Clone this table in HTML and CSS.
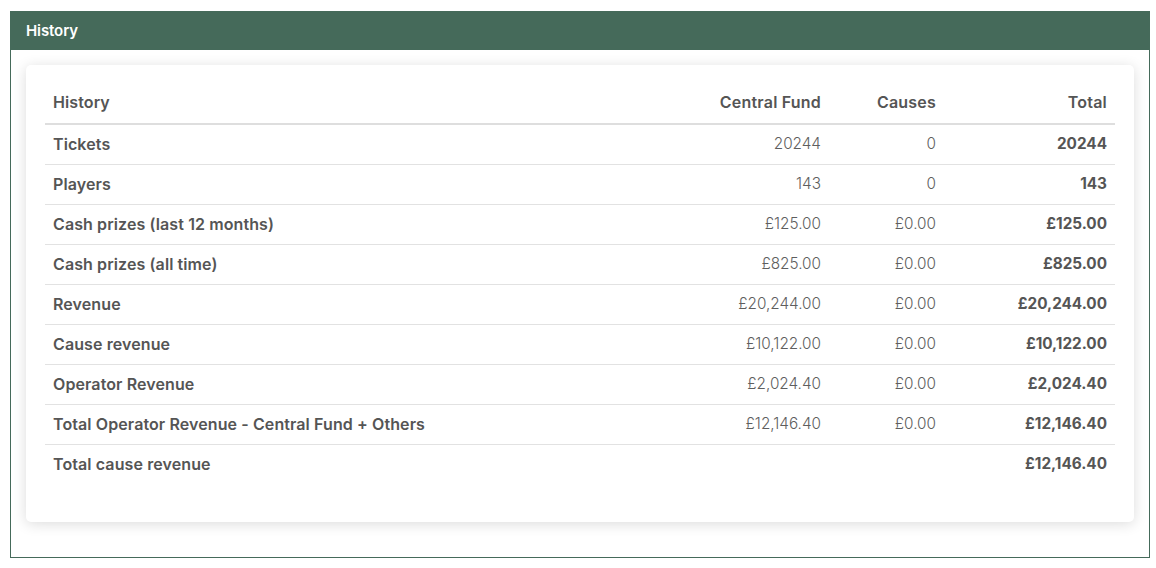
FILE: index.html
```html
<!DOCTYPE html>
<html>
<head>
<meta charset="utf-8">
<link rel="stylesheet" href="styles.css">
</head>
<body>
<section class="panel">
  <header class="panel-head">History</header>
  <div class="panel-body">
    <div class="card">
      <table class="hist">
        <thead>
          <tr><th class="lbl">History</th><th class="num cf">Central Fund</th><th class="num cs">Causes</th><th class="num tt">Total</th></tr>
        </thead>
        <tbody>
          <tr><td class="lbl">Tickets</td><td class="num">20244</td><td class="num">0</td><td class="num b">20244</td></tr>
          <tr><td class="lbl">Players</td><td class="num">143</td><td class="num">0</td><td class="num b">143</td></tr>
          <tr><td class="lbl">Cash prizes (last 12 months)</td><td class="num">£125.00</td><td class="num">£0.00</td><td class="num b">£125.00</td></tr>
          <tr><td class="lbl">Cash prizes (all time)</td><td class="num">£825.00</td><td class="num">£0.00</td><td class="num b">£825.00</td></tr>
          <tr><td class="lbl">Revenue</td><td class="num">£20,244.00</td><td class="num">£0.00</td><td class="num b">£20,244.00</td></tr>
          <tr><td class="lbl">Cause revenue</td><td class="num">£10,122.00</td><td class="num">£0.00</td><td class="num b">£10,122.00</td></tr>
          <tr><td class="lbl">Operator Revenue</td><td class="num">£2,024.40</td><td class="num">£0.00</td><td class="num b">£2,024.40</td></tr>
          <tr><td class="lbl">Total Operator Revenue - Central Fund + Others</td><td class="num">£12,146.40</td><td class="num">£0.00</td><td class="num b">£12,146.40</td></tr>
          <tr class="last"><td class="lbl">Total cause revenue</td><td class="num"></td><td class="num"></td><td class="num b">£12,146.40</td></tr>
        </tbody>
      </table>
    </div>
  </div>
</section>
</body>
</html>
```
FILE: styles.css
```css
html, body { margin: 0; background: #fff; }
body { padding: 11px 6px 0 10px; font-family: Inter, "Noto Sans", sans-serif; }
.panel { width: 1140px; box-sizing: border-box; border: 1px solid #456a5a; }
.panel-head {
  background: #456a5a; color: #fff; height: 38px; line-height: 38px;
  padding-left: 15px; font-size: 15px; font-weight: 600; letter-spacing: -0.1px;
}
.panel-body { padding: 15px 15px 35px 15px; }
.card {
  background: #fff; border-radius: 5px;
  box-shadow: 0 2px 14px rgba(0,0,0,0.14);
  padding: 17px 19px 38px 19px;
}
.hist { width: 100%; border-collapse: collapse; font-size: 15.3px; }
.hist th, .hist td { padding: 0 8px 2px 8px; height: 37px; line-height: 20px; }
.hist thead th { height: 39px; border-bottom: 2px solid #dedede; color: #555; font-weight: 600; }
.hist tbody tr { border-bottom: 1px solid #e2e2e2; }
.hist tbody tr.last { border-bottom: none; }
.lbl { text-align: left; color: #555; font-weight: 600; font-size: 16px; letter-spacing: 0.1px; }
.num { text-align: right; color: #5e5e5e; font-weight: 300; }
th.num { font-weight: 600; color: #555; font-size: 16px; letter-spacing: 0.2px; }
.num.b { font-weight: 700; color: #555; }
.cf { width: 150px; }
.cs { width: 99px; }
.tt { width: 155px; }
```
